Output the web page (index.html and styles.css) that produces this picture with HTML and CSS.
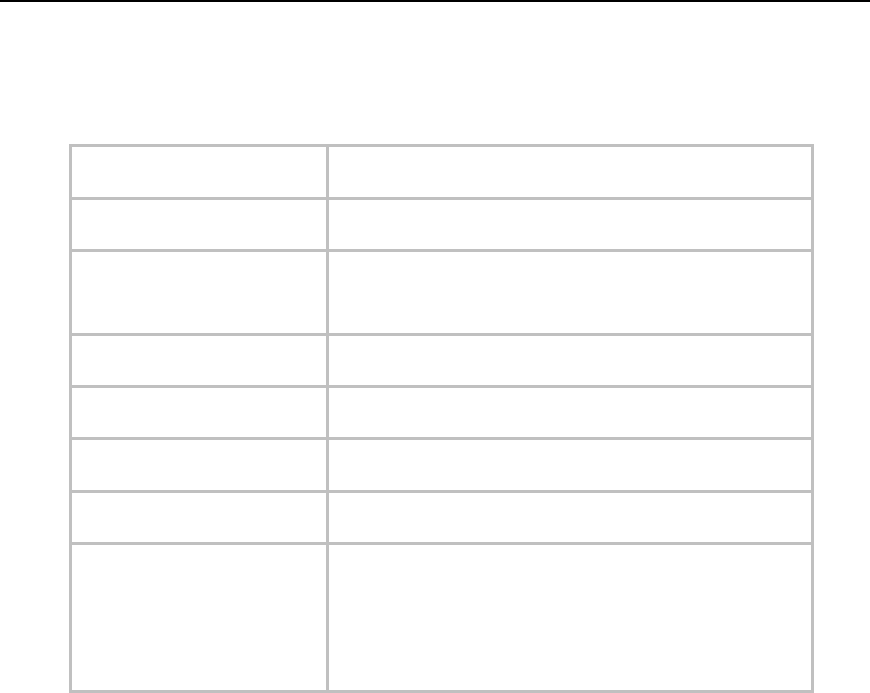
FILE: index.html
```html
<!DOCTYPE html>
<html lang="en">
<head>
<meta charset="utf-8">
<title>Table</title>
<link rel="stylesheet" href="styles.css">
</head>
<body>
<div class="topline"></div>
<main class="page">
  <div class="grid">
    <div class="cell r1"></div><div class="cell r1"></div>
    <div class="cell r2"></div><div class="cell r2"></div>
    <div class="cell r3"></div><div class="cell r3"></div>
    <div class="cell r4"></div><div class="cell r4"></div>
    <div class="cell r5"></div><div class="cell r5"></div>
    <div class="cell r6"></div><div class="cell r6"></div>
    <div class="cell r7"></div><div class="cell r7"></div>
    <div class="cell r8"></div><div class="cell r8"></div>
  </div>
</main>
</body>
</html>
```
FILE: styles.css
```css
html, body {
  margin: 0;
  padding: 0;
  background: #ffffff;
  font-family: "Liberation Sans", Arial, sans-serif;
}
body {
  height: 693px;
  overflow: hidden;
}
.topline {
  height: 2px;
  background: #000000;
}
.page {
  padding: 142px 0 0 69px;
}
.grid {
  width: 739px;
  display: grid;
  grid-template-columns: 254px 482px;
  grid-template-rows: 50px 49px 81px 49px 49px 50px 49px 145px;
  gap: 3px;
  padding: 3px;
  background: #c0c0c0;
}
.cell {
  background: #ffffff;
}
```
